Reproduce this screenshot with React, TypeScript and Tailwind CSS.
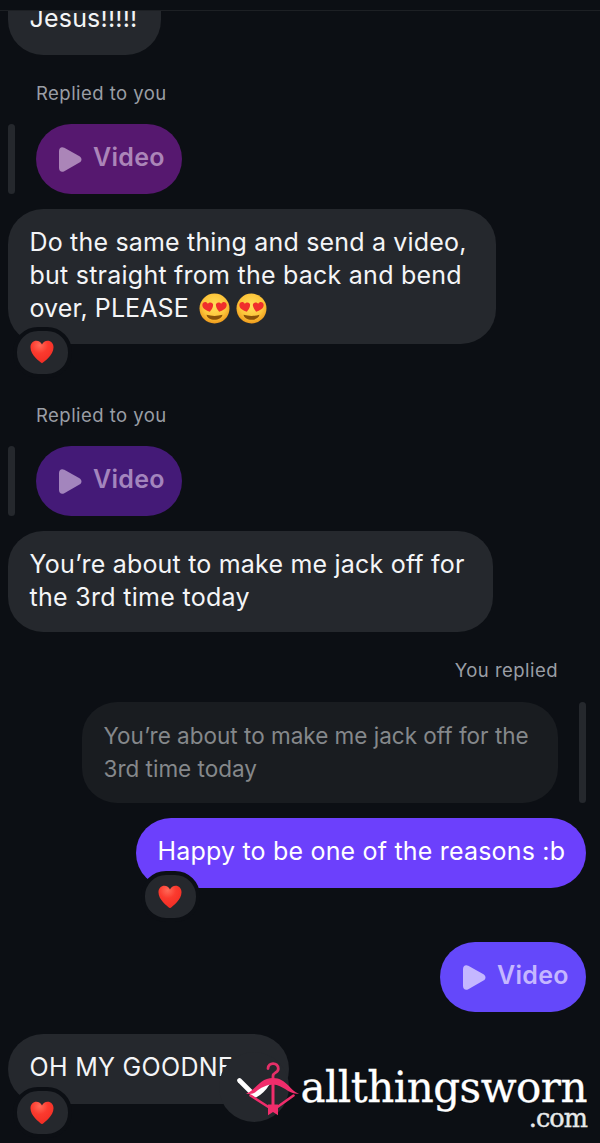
import type { ReactNode } from "react";

function Heart() {
  return (
    <svg className="h-[23.5px] w-6" viewBox="0 0 25 24" aria-label="heart">
      <defs>
        <radialGradient id="heartFill" cx="0.4" cy="0.2" r="0.9">
          <stop offset="0" stopColor="#ff6a58" />
          <stop offset="0.4" stopColor="#fb3a2e" />
          <stop offset="1" stopColor="#ef2a22" />
        </radialGradient>
      </defs>
      <path
        d="M12.5 24C10.5 22.3 .5 15.6.5 7.2.5 3 3.3.5 6.6.5c2.6 0 4.9 1.6 5.9 4 1-2.4 3.300-4 5.900-4 3.300 0 6.100 2.500 6.100 6.700 0 8.400-10 15.100-12 16.800z"
        fill="url(#heartFill)"
      />
    </svg>
  );
}

function HeartEyes() {
  return (
    <svg className="h-[31px] w-[31px] shrink-0" viewBox="0 0 31 31" aria-label="smiling face with heart eyes">
      <defs>
        <radialGradient id="face" cx="0.5" cy="0.4" r="0.6">
          <stop offset="0" stopColor="#ffe05a" />
          <stop offset="0.65" stopColor="#fdc53a" />
          <stop offset="1" stopColor="#ee9a1c" />
        </radialGradient>
      </defs>
      <circle cx="15.500" cy="15.500" r="15" fill="url(#face)" />
      <path d="M7.500 21.800q8 2.200 16 0c-.8 3.200-4 5-8 5s-7.200-1.800-8-5z" fill="#8a5208" />
      <path d="M10.800 18.800C7.500 17.500 3.300 15.800 3.300 12c0-3.200 4-4.200 5.500-1.300 2.200-2.700 6.200-.8 5.200 2.200-.5 2.300-2 4.200-3.200 5.900z" fill="#f02f2c" />
      <path d="M20.200 18.800c3.300-1.300 7.500-3 7.500-6.800 0-3.200-4-4.200-5.500-1.300-2.200-2.700-6.200-.8-5.200 2.200.5 2.300 2 4.200 3.200 5.900z" fill="#f02f2c" />
    </svg>
  );
}

function Reaction() {
  return (
    <span className="absolute left-[5px] top-full -mt-[17px] flex h-[51px] w-[59px] items-center justify-center rounded-[25px] border-4 border-[#0c0f14] bg-[#25282d] pr-px">
      <Heart />
    </span>
  );
}

function VideoPill({ tone }: { tone: string }) {
  return (
    <div className={`flex h-[70px] w-[146px] items-center rounded-[35px] pl-[23px] ${tone}`}>
      <svg className="h-[25px] w-[23px]" viewBox="0 0 23 25" fill="currentColor">
        <path d="M0 4C0 .8 2.500-.6 5.300.8L20.500 9.300c2.600 1.500 2.600 4.700 0 6.200L5.300 24.200C2.500 25.600 0 24.200 0 21z" />
      </svg>
      <span className="-mt-0.5 ml-[11px] text-[25px] font-semibold tracking-[0.3px]">Video</span>
    </div>
  );
}

function Line({ children, className = "" }: { children: ReactNode; className?: string }) {
  return <span className={`flex items-center whitespace-nowrap ${className}`}>{children}</span>;
}

const bubble = "relative rounded-[35px] bg-[#25282d] pl-[21.5px] text-[25px] leading-[33.3px] text-[#f4f5f7]";
const label = "h-6 text-[18.5px] leading-6 tracking-[0.46px] text-[#9a9ea5]";

function RepliedVideo({ tone }: { tone: string }) {
  return (
    <div className="flex gap-[21px]">
      <span className="w-[7px] rounded-full bg-[#25282d]" />
      <VideoPill tone={tone} />
    </div>
  );
}

function Watermark() {
  return (
    <div className="absolute left-[236px] top-[1060px] flex text-white">
      <svg className="h-14 w-[64px]" viewBox="236 1060 64 56" fill="none">
        <path d="M239.500 1080.500L254 1095" stroke="#fff" strokeWidth="4.600" strokeLinecap="round" />
        <path d="M268 1068.500c0-6.800 10.300-6.500 10.300.2 0 4.300-5.300 3.600-5.300 7.300v4" stroke="#e52f68" strokeWidth="2.800" strokeLinecap="round" />
        <path d="M246 1093.500c9-2 13-15.500 27-15.500s17 13.500 26 15.500c-10 2-14.500-8.500-26-9-11.500.5-16 12-27 9z" fill="#f02d6b" />
        <path d="M250.500 1095.500l19.500 12.500M293.500 1095.500L276 1108" stroke="#f02d6b" strokeWidth="2.600" strokeLinecap="round" />
        <path d="M252.500 1094.500l3.500 3q8-4 13.500-13-9 2.500-17 10z" fill="#fff" />
        <path d="M273 1084v22" stroke="#f02d6b" strokeWidth="3" />
        <path d="M268 1104.500h10v10.800l-5-3.300-5 3.300z" fill="#f02d6b" />
      </svg>
      <div className="flex w-[287px] flex-col items-end pl-px font-['DejaVu_Serif',serif]">
        <span className="mt-1 h-[38px] whitespace-nowrap text-[42px] leading-[48px] tracking-[-0.5px] [-webkit-text-stroke:0.3px_white]">allthingsworn</span>
        <span className="mt-1 text-[25.5px] leading-6 tracking-[-0.9px] text-[#e8e9ea] [-webkit-text-stroke:0.4px_#e8e9ea]">.com</span>
      </div>
    </div>
  );
}

export default function App() {
  return (
    <main className="relative flex h-[1143px] w-[600px] flex-col overflow-hidden bg-[#0c0f14] font-['Inter',sans-serif]">
      <header className="h-[11px] shrink-0 border-b border-[#1d2024]" />
      <section className="flex flex-col pl-2 pr-[14px]">
        <div className="flex h-[43.5px] w-[153px] items-end overflow-hidden rounded-b-[35px] bg-[#25282d] pb-5 pl-[21.5px] text-[25px] leading-[33px] tracking-[0.2px] text-[#f4f5f7]">
          Jesus!!!!!
        </div>

        <div className={`mt-[26.5px] pl-7 ${label}`}>Replied to you</div>
        <div className="mt-[19px]"><RepliedVideo tone="bg-[#56186f] text-[#ab85b8]" /></div>

        <div className={`${bubble} mt-[14.5px] h-[135px] w-[488px] pt-[17px]`}>
          <Line className="tracking-[0.18px]">Do the same thing and send a video,</Line>
          <Line className="tracking-[0.24px]">but straight from the back and bend</Line>
          <Line className="tracking-[0.1px]">
            over, PLEASE
            <span className="ml-[10px] flex gap-[6px]"><HeartEyes /><HeartEyes /></span>
          </Line>
          <Reaction />
        </div>

        <div className={`mt-[59.5px] pl-7 ${label}`}>Replied to you</div>
        <div className="mt-[19px]"><RepliedVideo tone="bg-[#441a77] text-[#a385bd]" /></div>

        <div className={`${bubble} mt-[14.5px] h-[101.5px] w-[484.5px] pt-[17px]`}>
          <Line className="tracking-[0.2px]">You’re about to make me jack off for</Line>
          <Line className="tracking-[0.3px]">the 3rd time today</Line>
        </div>

        <div className={`mt-[26px] self-end pr-7 ${label}`}>You replied</div>
        <div className="mt-[19.5px] flex h-[101.5px] gap-[21px] self-end">
          <div className="w-[476px] rounded-[35px] bg-[#191c20] pl-[21.5px] pt-[17px] text-[22.5px] leading-[33.3px] text-[#85888b]">
            <Line>You’re about to make me jack off for the</Line>
            <Line>3rd time today</Line>
          </div>
          <span className="w-[7px] rounded-full bg-[#25282d]" />
        </div>

        <div className="relative mt-[15px] h-[70px] w-[450px] self-end rounded-[35px] bg-[#6c40fc] pl-[21.5px] pt-[17px] text-[25px] leading-[33px] text-white">
          <Line className="tracking-[0.19px]">Happy to be one of the reasons :b</Line>
          <Reaction />
        </div>
        <div className="mt-[54px] self-end"><VideoPill tone="bg-[#6448fa] text-[#c5b7ff]" /></div>

        <div className={`${bubble} mt-[21.5px] h-[70.5px] w-[281px] pt-[17px]`}>
          <Line className="tracking-[0.3px]">OH MY GOODNE</Line>
          <span className="absolute -bottom-[18px] right-0 size-[70px] rounded-full bg-[#25282d]" />
          <Reaction />
        </div>
      </section>
      <Watermark />
    </main>
  );
}
